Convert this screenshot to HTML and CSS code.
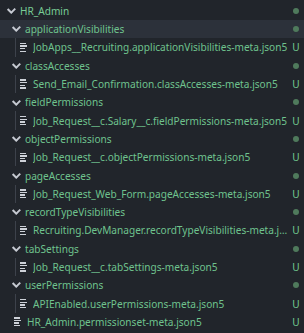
FILE: index.html
```html
<!DOCTYPE html>
<html lang="en">
  <head>
    <meta charset="UTF-8" />
    <meta name="viewport" content="width=device-width, initial-scale=1.0" />
    <title>Explorer</title>
    <link rel="stylesheet" href="styles.css">
  </head>
  <body>
    <div class="tree">
      <div class="row lv1">
        <span class="arrow"><b></b><b></b></span>
        <span class="name">HR_Admin</span>
        <span class="deco"><i class="dot"></i></span>
      </div>
      <div class="row lv2 active">
        <span class="arrow"><b></b><b></b></span>
        <span class="name">applicationVisibilities</span>
        <span class="deco"><i class="dot"></i></span>
      </div>
      <div class="row lv3">
        <span class="ficon"><b></b><b></b><b></b><b></b></span>
        <span class="name">JobApps__Recruiting.applicationVisibilities-meta.json5</span>
        <span class="deco">U</span>
      </div>
      <div class="row lv2">
        <span class="arrow"><b></b><b></b></span>
        <span class="name">classAccesses</span>
        <span class="deco"><i class="dot"></i></span>
      </div>
      <div class="row lv3">
        <span class="ficon"><b></b><b></b><b></b><b></b></span>
        <span class="name">Send_Email_Confirmation.classAccesses-meta.json5</span>
        <span class="deco">U</span>
      </div>
      <div class="row lv2">
        <span class="arrow"><b></b><b></b></span>
        <span class="name">fieldPermissions</span>
        <span class="deco"><i class="dot"></i></span>
      </div>
      <div class="row lv3">
        <span class="ficon"><b></b><b></b><b></b><b></b></span>
        <span class="name">Job_Request__c.Salary__c.fieldPermissions-meta.json5</span>
        <span class="deco">U</span>
      </div>
      <div class="row lv2">
        <span class="arrow"><b></b><b></b></span>
        <span class="name">objectPermissions</span>
        <span class="deco"><i class="dot"></i></span>
      </div>
      <div class="row lv3">
        <span class="ficon"><b></b><b></b><b></b><b></b></span>
        <span class="name">Job_Request__c.objectPermissions-meta.json5</span>
        <span class="deco">U</span>
      </div>
      <div class="row lv2">
        <span class="arrow"><b></b><b></b></span>
        <span class="name">pageAccesses</span>
        <span class="deco"><i class="dot"></i></span>
      </div>
      <div class="row lv3">
        <span class="ficon"><b></b><b></b><b></b><b></b></span>
        <span class="name">Job_Request_Web_Form.pageAccesses-meta.json5</span>
        <span class="deco">U</span>
      </div>
      <div class="row lv2">
        <span class="arrow"><b></b><b></b></span>
        <span class="name">recordTypeVisibilities</span>
        <span class="deco"><i class="dot"></i></span>
      </div>
      <div class="row lv3">
        <span class="ficon"><b></b><b></b><b></b><b></b></span>
        <span class="name">Recruiting.DevManager.recordTypeVisibilities-meta.json5</span>
        <span class="deco">U</span>
      </div>
      <div class="row lv2">
        <span class="arrow"><b></b><b></b></span>
        <span class="name">tabSettings</span>
        <span class="deco"><i class="dot"></i></span>
      </div>
      <div class="row lv3">
        <span class="ficon"><b></b><b></b><b></b><b></b></span>
        <span class="name">Job_Request__c.tabSettings-meta.json5</span>
        <span class="deco">U</span>
      </div>
      <div class="row lv2">
        <span class="arrow"><b></b><b></b></span>
        <span class="name">userPermissions</span>
        <span class="deco"><i class="dot"></i></span>
      </div>
      <div class="row lv3">
        <span class="ficon"><b></b><b></b><b></b><b></b></span>
        <span class="name">APIEnabled.userPermissions-meta.json5</span>
        <span class="deco">U</span>
      </div>
      <div class="row lv2">
        <span class="ficon"><b></b><b></b><b></b><b></b></span>
        <span class="name">HR_Admin.permissionset-meta.json5</span>
        <span class="deco">U</span>
      </div>
    </div>
  </body>
</html>
```

FILE: styles.css
```css
* {
  margin: 0;
  padding: 0;
  box-sizing: border-box;
}
html,
body {
  width: 304px;
  height: 333px;
  overflow: hidden;
  background-color: #21252b;
}
body {
  font-family: "Noto Sans", "Open Sans", sans-serif;
  font-size: 10.1px;
  color: #6fc38e;
}
.tree {
  padding-top: 1.7px;
}
.row {
  position: relative;
  display: flex;
  align-items: center;
  height: 18.3px;
  padding-right: 5px;
  white-space: nowrap;
}
.row.active {
  background-color: #2c313a;
}
.lv1 {
  padding-left: 7px;
}
.lv2 {
  padding-left: 12px;
}
.lv3 {
  padding-left: 20px;
}
/* indent guide */
.lv3::before {
  content: "";
  position: absolute;
  left: 15px;
  top: 0;
  bottom: 0;
  width: 1px;
  background-color: #3d424b;
}
/* chevron: two short bars */
.arrow {
  position: relative;
  display: block;
  flex: none;
  width: 9px;
  height: 6px;
  margin-right: 4px;
}
.arrow b {
  position: absolute;
  top: 2.2px;
  width: 5.6px;
  height: 1.5px;
  background-color: #c6cad2;
}
.arrow b:first-child {
  left: 0;
  transform: rotate(45deg);
}
.arrow b:last-child {
  left: 3.4px;
  transform: rotate(-45deg);
}
/* file icon: four lines */
.ficon {
  display: flex;
  flex-direction: column;
  gap: 1.2px;
  flex: none;
  width: 7px;
  margin-right: 6px;
}
.ficon b {
  display: block;
  height: 1.4px;
  background-color: #cdd1d8;
}
.ficon b:nth-child(1) {
  width: 6px;
}
.ficon b:nth-child(2) {
  width: 6.5px;
}
.ficon b:nth-child(3) {
  width: 4.5px;
}
.ficon b:nth-child(4) {
  width: 5.5px;
}
.lv2 .ficon {
  margin-left: 2px;
}
.name {
  flex: 1;
  min-width: 0;
  margin-right: 4px;
  overflow: hidden;
  text-overflow: ellipsis;
}
.lv1 .name {
  color: #78cc95;
}
.deco {
  flex: none;
  width: 6px;
  display: flex;
  justify-content: center;
  color: #73c991;
}
.dot {
  display: block;
  flex: none;
  width: 6px;
  height: 6px;
  border-radius: 50%;
  background-color: #4f7a5c;
}
```
